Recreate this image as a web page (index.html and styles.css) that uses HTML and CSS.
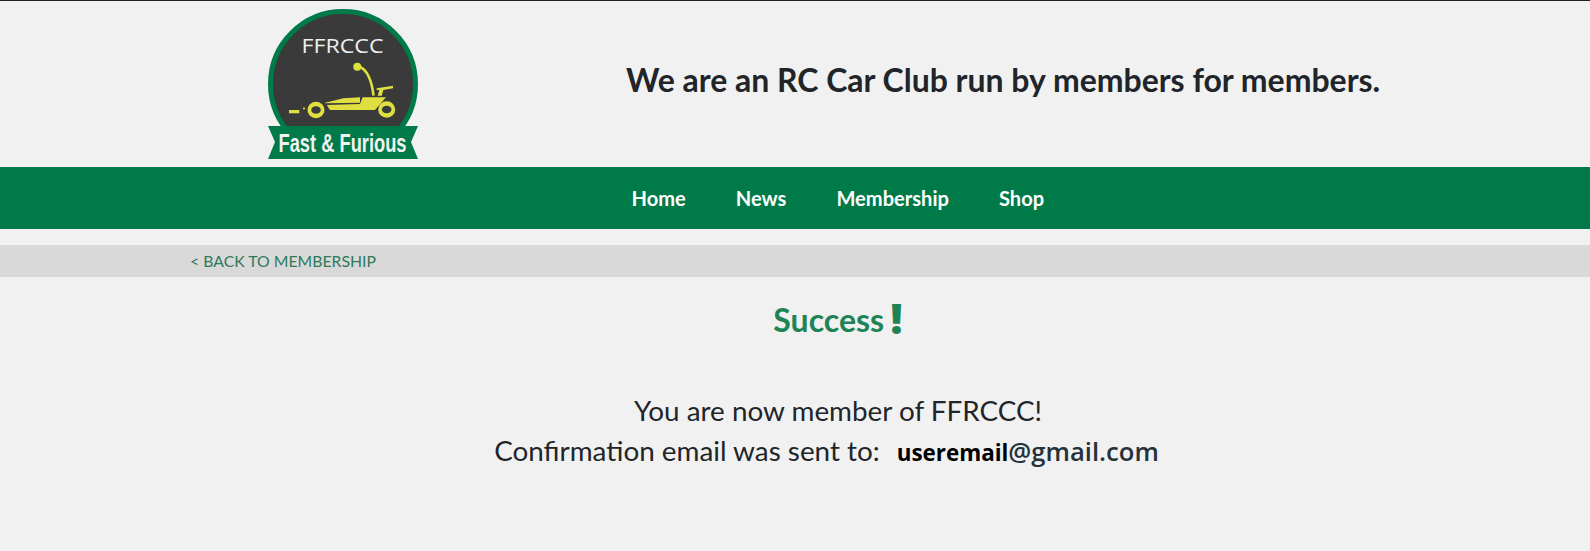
FILE: index.html
```html
<!DOCTYPE html>
<html lang="en">
<head>
    <meta charset="UTF-8">
    <meta name="viewport" content="width=device-width, initial-scale=1.0">
    <title>FFRCCC - Success</title>
    <link rel="stylesheet" href="styles.css">
</head>
<body>
    <header class="top">
        <svg class="logo" viewBox="0 0 150 152" width="150" height="152" role="img" aria-label="FFRCCC Fast and Furious">
            <circle cx="75" cy="75" r="72.5" fill="#3a3a3a" stroke="#007a48" stroke-width="5"/>
            <text class="logo-name" x="74.5" y="44" text-anchor="middle" textLength="82" lengthAdjust="spacingAndGlyphs">FFRCCC</text>
            <g fill="#dfe03f">
                <circle cx="89.3" cy="57.7" r="4"/>
                <path d="M91 57.5C99 60 104 72 105.5 86.7" fill="none" stroke="#dfe03f" stroke-width="2.6"/>
                <path d="M108.7 79.3l16.3-2.6v2.6l-9.7 1.7-1.6 5.7h-4l1.6-5.7h-2.6z"/>
                <path d="M21 101h10.3v3.3H21z"/>
                <circle cx="36" cy="99.5" r="1.1"/>
                <path d="M57 93.7l18.3-4.4 16.7-1v5.4l-35 .6z"/>
                <path d="M58.7 96l33.3-1 2.7-6.7H118l-4.3 5-6.7 7.7H62z"/>
                <ellipse cx="48" cy="101" rx="8.5" ry="8.2"/>
                <ellipse cx="118.7" cy="100.5" rx="8.5" ry="8.2"/>
            </g>
            <g fill="#3a3a3a">
                <ellipse cx="48" cy="101" rx="4.8" ry="3.8"/>
                <ellipse cx="118.7" cy="100.5" rx="4.8" ry="3.8"/>
            </g>
            <path d="M0 117h150l-7 16 7 17H0l7-17z" fill="#007a48"/>
            <text class="logo-slogan" x="74.5" y="143" text-anchor="middle" textLength="128" lengthAdjust="spacingAndGlyphs">Fast &amp; Furious</text>
        </svg>
        <h1 class="tagline">We are an RC Car Club run by members for members.</h1>
    </header>

    <nav class="menu">
        <a href="#">Home</a>
        <a href="#">News</a>
        <a href="#">Membership</a>
        <a href="#">Shop</a>
    </nav>

    <div class="crumb">
        <a href="#">&lt; Back to membership</a>
    </div>

    <main class="result">
        <h2 class="result-title">Success<span class="bang">!</span></h2>
        <p class="result-text">You are now member of FFRCCC!</p>
        <p class="result-text result-email">Confirmation email was sent to:<span class="email"><b>useremail</b>@gmail.com</span></p>
    </main>
</body>
</html>
```

FILE: styles.css
```css
body {
    font-family: Lato, "Open Sans", sans-serif;
    background-color: #f1f1f1;
    color: #212529;
    margin: 0;
}
a {
    text-decoration: none;
}
.top {
    display: flex;
    height: 166px;
    padding-left: 268px;
    border-top: 1px solid #222;
}
.logo {
    flex: none;
    margin-top: 8px;
    overflow: visible;
}
.logo-name {
    font-family: "Open Sans", sans-serif;
    font-size: 20px;
    fill: #eee;
}
.logo-slogan {
    font-family: "Liberation Sans", sans-serif;
    font-size: 26px;
    font-weight: 700;
    fill: #f2f2f2;
}
.tagline {
    margin: 58px 0 0 208px;
    font-size: 31.98px;
    line-height: 42px;
    font-weight: 700;
}
.menu {
    display: flex;
    gap: 50px;
    height: 62px;
    align-items: center;
    padding-left: 631.5px;
    background-color: #007a48;
}
.menu a {
    color: #fff;
    font-size: 20.1px;
    font-weight: 700;
}
.crumb {
    height: 32px;
    line-height: 32px;
    margin-top: 16px;
    padding-left: 190px;
    background-color: #d9d9d9;
}
.crumb a {
    color: #2f7a5b;
    font-size: 15.8px;
    text-transform: uppercase;
}
.result {
    text-align: center;
    padding-left: 86px;
}
.result-title {
    margin: 20px 0 50px;
    font-size: 32px;
    line-height: 42px;
    color: #1e8455;
    font-weight: 700;
}
.bang {
    font-family: "Open Sans", sans-serif;
    font-size: 43px;
    line-height: 42px;
    font-weight: 800;
    margin-left: 6px;
    vertical-align: -2px;
}
.result-text {
    margin: 0;
    font-size: 27.85px;
    line-height: 40px;
}
.result-email {
    padding-right: 23px;
}
.email {
    margin-left: 17px;
    font-family: "Open Sans", sans-serif;
    font-size: 25.6px;
    font-weight: 600;
    color: #25323b;
}
.email b {
    color: #000;
    font-size: 22.4px;
    font-weight: 700;
}
```
